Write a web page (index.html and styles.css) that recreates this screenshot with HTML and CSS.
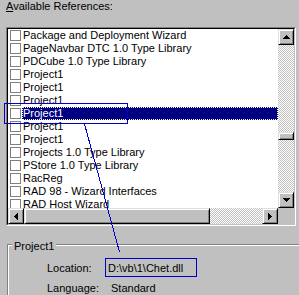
FILE: index.html
```html
<!DOCTYPE html>
<html lang="en">
<head>
    <meta charset="UTF-8">
    <title>References</title>
    <link rel="stylesheet" href="styles.css">
</head>
<body>

<div class="title"><u>A</u>vailable References:</div>

<div class="listbox">
    <div class="listbox-inner">
        <ul class="list">
            <li class="row"><span class="check"></span><span class="name">Package and Deployment Wizard</span></li>
            <li class="row"><span class="check"></span><span class="name">PageNavbar DTC 1.0 Type Library</span></li>
            <li class="row"><span class="check"></span><span class="name">PDCube 1.0 Type Library</span></li>
            <li class="row"><span class="check"></span><span class="name">Project1</span></li>
            <li class="row"><span class="check"></span><span class="name">Project1</span></li>
            <li class="row"><span class="check"></span><span class="name">Project1</span></li>
            <li class="row selected"><span class="check"></span><span class="name">Project1</span></li>
            <li class="row"><span class="check"></span><span class="name">Project1</span></li>
            <li class="row"><span class="check"></span><span class="name">Project1</span></li>
            <li class="row"><span class="check"></span><span class="name">Projects 1.0 Type Library</span></li>
            <li class="row"><span class="check"></span><span class="name">PStore 1.0 Type Library</span></li>
            <li class="row"><span class="check"></span><span class="name">RacReg</span></li>
            <li class="row"><span class="check"></span><span class="name">RAD 98 - Wizard Interfaces</span></li>
            <li class="row"><span class="check"></span><span class="name">RAD Host Wizard</span></li>
        </ul>

        <div class="vscroll">
            <div class="sb">
                <svg width="7" height="4" viewBox="0 0 7 4"><path d="M3 0h1v1H3zM2 1h3v1H2zM1 2h5v1H1zM0 3h7v1H0z"/></svg>
            </div>
            <div class="v-gap"></div>
            <div class="sb thumb-v"></div>
            <div class="rest"></div>
            <div class="sb">
                <svg width="7" height="4" viewBox="0 0 7 4"><path d="M0 0h7v1H0zM1 1h5v1H1zM2 2h3v1H2zM3 3h1v1H3z"/></svg>
            </div>
        </div>

        <div class="hscroll">
            <div class="sb">
                <svg width="4" height="7" viewBox="0 0 4 7"><path d="M0 3h1v1H0zM1 2h1v3H1zM2 1h1v5H2zM3 0h1v7H3z"/></svg>
            </div>
            <div class="sb thumb-h"></div>
            <div class="rest"></div>
            <div class="sb">
                <svg width="4" height="7" viewBox="0 0 4 7"><path d="M0 0h1v7H0zM1 1h1v5H1zM2 2h1v3H2zM3 3h1v1H3z"/></svg>
            </div>
        </div>

        <div class="corner"></div>
    </div>
</div>

<fieldset class="group">
    <legend>Project1</legend>
    <div class="props">
        <span class="label">Location:</span>
        <span class="value path">D:\vb\1\Chet.dll</span>
        <span class="label">Language:</span>
        <span class="value lang">Standard</span>
    </div>
</fieldset>

<!-- callout drawn over the dialog -->
<svg class="callout" width="299" height="295" viewBox="0 0 299 295">
    <rect x="4.5" y="103.5" width="123" height="20" fill="none" stroke="#0000cc"/>
    <line x1="84.5" y1="124" x2="119.5" y2="252" stroke="#0000cc" shape-rendering="crispEdges"/>
</svg>

</body>
</html>
```

FILE: styles.css
```css
html {
    overflow: hidden;
}
body {
    margin: 0;
    background-color: #c0c0c0;
    font-family: "Liberation Sans", Arial, sans-serif;
    font-size: 11px;
    line-height: 13px;
    color: #000;
}
.title {
    height: 27px;
    padding-left: 6px;
}
.listbox {
    box-sizing: border-box;
    width: 290px;
    height: 199px;
    margin-left: 6px;
    border: 1px solid;
    border-color: #808080 #fff #fff #808080;
}
.listbox-inner {
    box-sizing: border-box;
    height: 100%;
    border: 1px solid;
    border-color: #000 #c0c0c0 #c0c0c0 #000;
    background-color: #fff;
    display: grid;
    grid-template-columns: 1fr 16px;
    grid-template-rows: 1fr 16px;
}
.list {
    margin: 0;
    padding: 0;
    list-style: none;
    overflow: hidden;
}
.row {
    display: flex;
    align-items: center;
    height: 13px;
    padding-left: 2px;
}
.check {
    flex: none;
    box-sizing: border-box;
    width: 11px;
    height: 11px;
    border: 1px solid #808080;
    background-color: #fff;
    margin-right: 1px;
}
.name {
    padding: 0 1px;
    white-space: nowrap;
}
.selected .name {
    flex: 1;
    background-color: #000080;
    color: #fff;
    outline: 1px dotted #fff;
    outline-offset: -1px;
}
.vscroll, .hscroll {
    display: flex;
    background: repeating-conic-gradient(#c0c0c0 0 25%, #fff 0 50%) 0 0 / 2px 2px;
}
.vscroll {
    flex-direction: column;
}
.sb {
    flex: none;
    box-sizing: border-box;
    width: 16px;
    height: 16px;
    background-color: #c0c0c0;
    border: 1px solid;
    border-color: #dfdfdf #000 #000 #dfdfdf;
    box-shadow: inset 1px 1px #fff, inset -1px -1px #808080;
    display: flex;
    align-items: center;
    justify-content: center;
}
.sb svg {
    display: block;
}
.v-gap {
    height: 87px;
}
.thumb-v {
    height: 8px;
}
.thumb-h {
    width: 186px;
}
.rest {
    flex: 1;
}
.corner {
    background-color: #c0c0c0;
}
/* group box runs off the right and bottom of the window */
.group {
    box-sizing: border-box;
    width: 292px;
    margin: 10px 0 0 7px;
    padding: 5px 0 0 4px;
    border: 1px solid #808080;
    border-right: 0;
    border-bottom: 0;
    box-shadow: inset 1px 1px #fff;
}
.group legend {
    padding: 4px 2px 0;
    line-height: 13px;
    background-color: #c0c0c0;
}
.props {
    margin-left: 35px;
    display: grid;
    grid-template-columns: 58px auto;
    row-gap: 5px;
    align-items: baseline;
    justify-items: start;
}
.path {
    box-sizing: border-box;
    width: 92px;
    padding: 3px 0 1px 2px;
    border: 1px solid #0000cc;
}
.lang {
    margin-left: 6px;
}
.callout {
    position: absolute;
    top: 0;
    left: 0;
    pointer-events: none;
}
```
